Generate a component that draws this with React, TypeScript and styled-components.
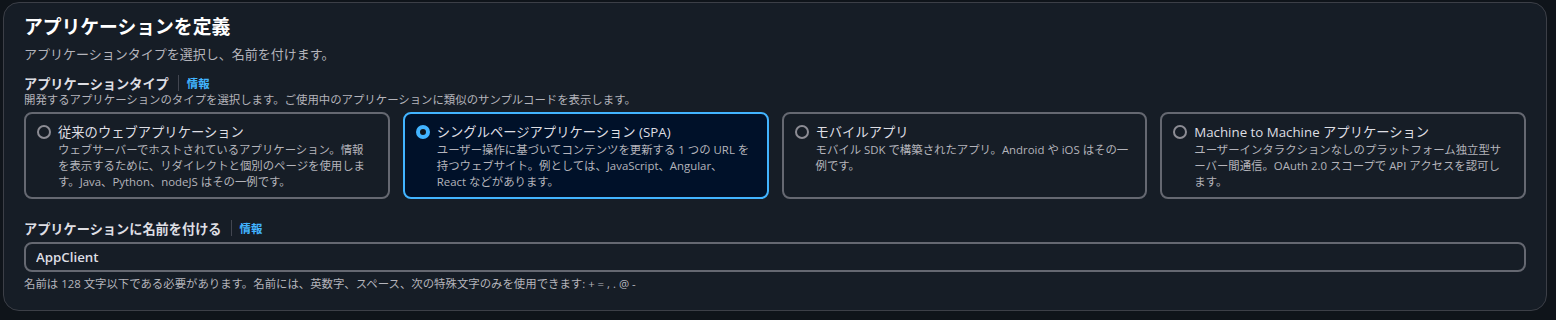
import React, { useState } from 'react';
import styled, { createGlobalStyle } from 'styled-components';

const GlobalStyle = createGlobalStyle`
  body {
    margin: 0;
    background: #0f141a;
    font-family: 'Open Sans', 'Noto Sans CJK JP', sans-serif;
  }
`;

const Container = styled.section`
  margin: 2px 0 0 3px;
  width: 1544px;
  box-sizing: border-box;
  background: #161d26;
  border: 1px solid #3c3f47;
  border-radius: 16px;
  padding: 11px 20px 18px 20px;
`;

const Heading = styled.h2`
  margin: 0;
  font-size: 18.8px;
  line-height: 26px;
  font-weight: 700;
  color: #ffffff;
`;

const Subtitle = styled.p`
  margin: 4px 0 0;
  font-size: 13px;
  line-height: 20px;
  color: #b4b4bb;
`;

const Field = styled.div<{ $top: number }>`
  margin-top: ${(p) => p.$top}px;
`;

const LabelRow = styled.div`
  display: flex;
  align-items: center;
  height: 18px;
`;

const Label = styled.span`
  font-size: 13.2px;
  font-weight: 700;
  color: #dedee3;
`;

const Divider = styled.span`
  width: 1px;
  height: 16px;
  background: #424650;
  margin: 0 8px 0 9px;
`;

const InfoLink = styled.a`
  font-size: 11.4px;
  font-weight: 700;
  color: #42b4ff;
  text-decoration: none;
  cursor: pointer;
`;

const Description = styled.div`
  font-size: 11.4px;
  line-height: 16px;
  color: #b4b4bb;
`;

const Tiles = styled.div`
  display: grid;
  grid-template-columns: repeat(4, 1fr);
  gap: 13px;
  margin-top: 4px;
`;

const Tile = styled.label<{ $selected: boolean }>`
  display: flex;
  gap: 7px;
  align-items: flex-start;
  box-sizing: border-box;
  height: 87px;
  padding: 8px 8px 8px 11px;
  border: 2px solid ${(p) => (p.$selected ? '#42b4ff' : '#656871')};
  border-radius: 8px;
  background: ${(p) => (p.$selected ? '#001129' : 'transparent')};
  cursor: pointer;
`;

const Radio = styled.span<{ $checked: boolean }>`
  flex: none;
  width: 14px;
  height: 14px;
  margin-top: 3px;
  box-sizing: border-box;
  border-radius: 50%;
  border: ${(p) => (p.$checked ? '4px solid #42b4ff' : '2px solid #8c8c94')};
  background: ${(p) => (p.$checked ? '#0f141a' : 'transparent')};
`;

const TileText = styled.div`
  display: flex;
  flex-direction: column;
  min-width: 0;
`;

const TileTitle = styled.span`
  font-size: 13.3px;
  line-height: 20px;
  color: #dedee3;
`;

const TileLine = styled.span`
  font-size: 11.4px;
  line-height: 16px;
  white-space: nowrap;
  color: #b4b4bb;
`;

const Input = styled.input`
  display: block;
  width: 100%;
  box-sizing: border-box;
  height: 30px;
  margin-top: 5px;
  padding: 0 10px;
  border: 2px solid #656871;
  border-radius: 8px;
  background: transparent;
  color: #dedee3;
  font-family: inherit;
  font-size: 13.3px;
  font-weight: 600;
  outline: none;
`;

const Hint = styled(Description)`
  margin-top: 4px;
`;

// lines are kept as they wrap in the original tiles
const types = [
  {
    id: 'traditional',
    title: '従来のウェブアプリケーション',
    lines: [
      'ウェブサーバーでホストされているアプリケーション。情報',
      'を表示するために、リダイレクトと個別のページを使用しま',
      'す。Java、Python、nodeJS はその一例です。',
    ],
  },
  {
    id: 'spa',
    title: 'シングルページアプリケーション (SPA)',
    lines: [
      'ユーザー操作に基づいてコンテンツを更新する 1 つの URL を',
      '持つウェブサイト。例としては、JavaScript、Angular、',
      'React などがあります。',
    ],
  },
  {
    id: 'mobile',
    title: 'モバイルアプリ',
    lines: ['モバイル SDK で構築されたアプリ。Android や iOS はその一', '例です。'],
  },
  {
    id: 'm2m',
    title: 'Machine to Machine アプリケーション',
    lines: [
      'ユーザーインタラクションなしのプラットフォーム独立型サ',
      'ーバー間通信。OAuth 2.0 スコープで API アクセスを認可し',
      'ます。',
    ],
  },
];

const App: React.FC = () => {
  const [selected, setSelected] = useState('spa');
  const [name, setName] = useState('AppClient');

  return (
    <>
      <GlobalStyle />
      <Container>
        <Heading>アプリケーションを定義</Heading>
        <Subtitle>アプリケーションタイプを選択し、名前を付けます。</Subtitle>

        <Field $top={10}>
          <LabelRow>
            <Label>アプリケーションタイプ</Label>
            <Divider />
            <InfoLink>情報</InfoLink>
          </LabelRow>
          <Description>開発するアプリケーションのタイプを選択します。ご使用中のアプリケーションに類似のサンプルコードを表示します。</Description>
          <Tiles>
            {types.map((t) => (
              <Tile key={t.id} $selected={selected === t.id} onClick={() => setSelected(t.id)}>
                <Radio $checked={selected === t.id} />
                <TileText>
                  <TileTitle>{t.title}</TileTitle>
                  {t.lines.map((line) => (
                    <TileLine key={line}>{line}</TileLine>
                  ))}
                </TileText>
              </Tile>
            ))}
          </Tiles>
        </Field>

        <Field $top={20}>
          <LabelRow>
            <Label>アプリケーションに名前を付ける</Label>
            <Divider />
            <InfoLink>情報</InfoLink>
          </LabelRow>
          <Input value={name} onChange={(e) => setName(e.target.value)} />
          <Hint>名前は 128 文字以下である必要があります。名前には、英数字、スペース、次の特殊文字のみを使用できます: + = , . @ -</Hint>
        </Field>
      </Container>
    </>
  );
};

export default App;
